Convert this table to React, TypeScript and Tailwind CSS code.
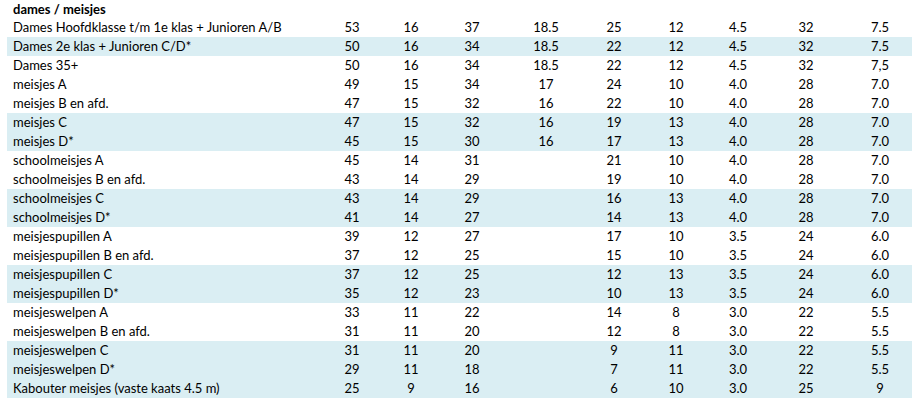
const rows: { label: string; values: string[]; shaded?: boolean }[] = [
  { label: "Dames Hoofdklasse t/m 1e klas + Junioren A/B", values: ["53", "16", "37", "18.5", "25", "12", "4.5", "32", "7.5"] },
  { label: "Dames 2e klas + Junioren C/D*", values: ["50", "16", "34", "18.5", "22", "12", "4.5", "32", "7.5"], shaded: true },
  { label: "Dames 35+", values: ["50", "16", "34", "18.5", "22", "12", "4.5", "32", "7,5"] },
  { label: "meisjes A", values: ["49", "15", "34", "17", "24", "10", "4.0", "28", "7.0"] },
  { label: "meisjes B en afd.", values: ["47", "15", "32", "16", "22", "10", "4.0", "28", "7.0"] },
  { label: "meisjes C", values: ["47", "15", "32", "16", "19", "13", "4.0", "28", "7.0"], shaded: true },
  { label: "meisjes D*", values: ["45", "15", "30", "16", "17", "13", "4.0", "28", "7.0"], shaded: true },
  { label: "schoolmeisjes A", values: ["45", "14", "31", "", "21", "10", "4.0", "28", "7.0"] },
  { label: "schoolmeisjes B en afd.", values: ["43", "14", "29", "", "19", "10", "4.0", "28", "7.0"] },
  { label: "schoolmeisjes C", values: ["43", "14", "29", "", "16", "13", "4.0", "28", "7.0"], shaded: true },
  { label: "schoolmeisjes D*", values: ["41", "14", "27", "", "14", "13", "4.0", "28", "7.0"], shaded: true },
  { label: "meisjespupillen A", values: ["39", "12", "27", "", "17", "10", "3.5", "24", "6.0"] },
  { label: "meisjespupillen B en afd.", values: ["37", "12", "25", "", "15", "10", "3.5", "24", "6.0"] },
  { label: "meisjespupillen C", values: ["37", "12", "25", "", "12", "13", "3.5", "24", "6.0"], shaded: true },
  { label: "meisjespupillen D*", values: ["35", "12", "23", "", "10", "13", "3.5", "24", "6.0"], shaded: true },
  { label: "meisjeswelpen A", values: ["33", "11", "22", "", "14", "8", "3.0", "22", "5.5"] },
  { label: "meisjeswelpen B en afd.", values: ["31", "11", "20", "", "12", "8", "3.0", "22", "5.5"] },
  { label: "meisjeswelpen C", values: ["31", "11", "20", "", "9", "11", "3.0", "22", "5.5"], shaded: true },
  { label: "meisjeswelpen D*", values: ["29", "11", "18", "", "7", "11", "3.0", "22", "5.5"], shaded: true },
  { label: "Kabouter meisjes (vaste kaats 4.5 m)", values: ["25", "9", "16", "", "6", "10", "3.0", "25", "9"], shaded: true },
];

// label col + 9 centred number columns
const grid = "grid grid-cols-[315px_60px_58px_64px_84px_52px_72px_52px_84px_64px]";

export default function App() {
  return (
    <div className="w-[912px] h-[404px] bg-white pl-[7px] text-[13px] leading-[19px] text-black [font-family:Lato,'Liberation_Sans',sans-serif]">
      <div className="h-[18px] pl-[6px] font-bold leading-[18px]">dames / meisjes</div>
      {rows.map((row) => (
        <div key={row.label} className={`${grid} h-[19px] ${row.shaded ? "bg-[#daeef3]" : ""}`}>
          <div className="pl-[6px] whitespace-nowrap">{row.label}</div>
          {row.values.map((v, i) => (
            <div key={i} className="text-center">
              {v}
            </div>
          ))}
        </div>
      ))}
    </div>
  );
}
